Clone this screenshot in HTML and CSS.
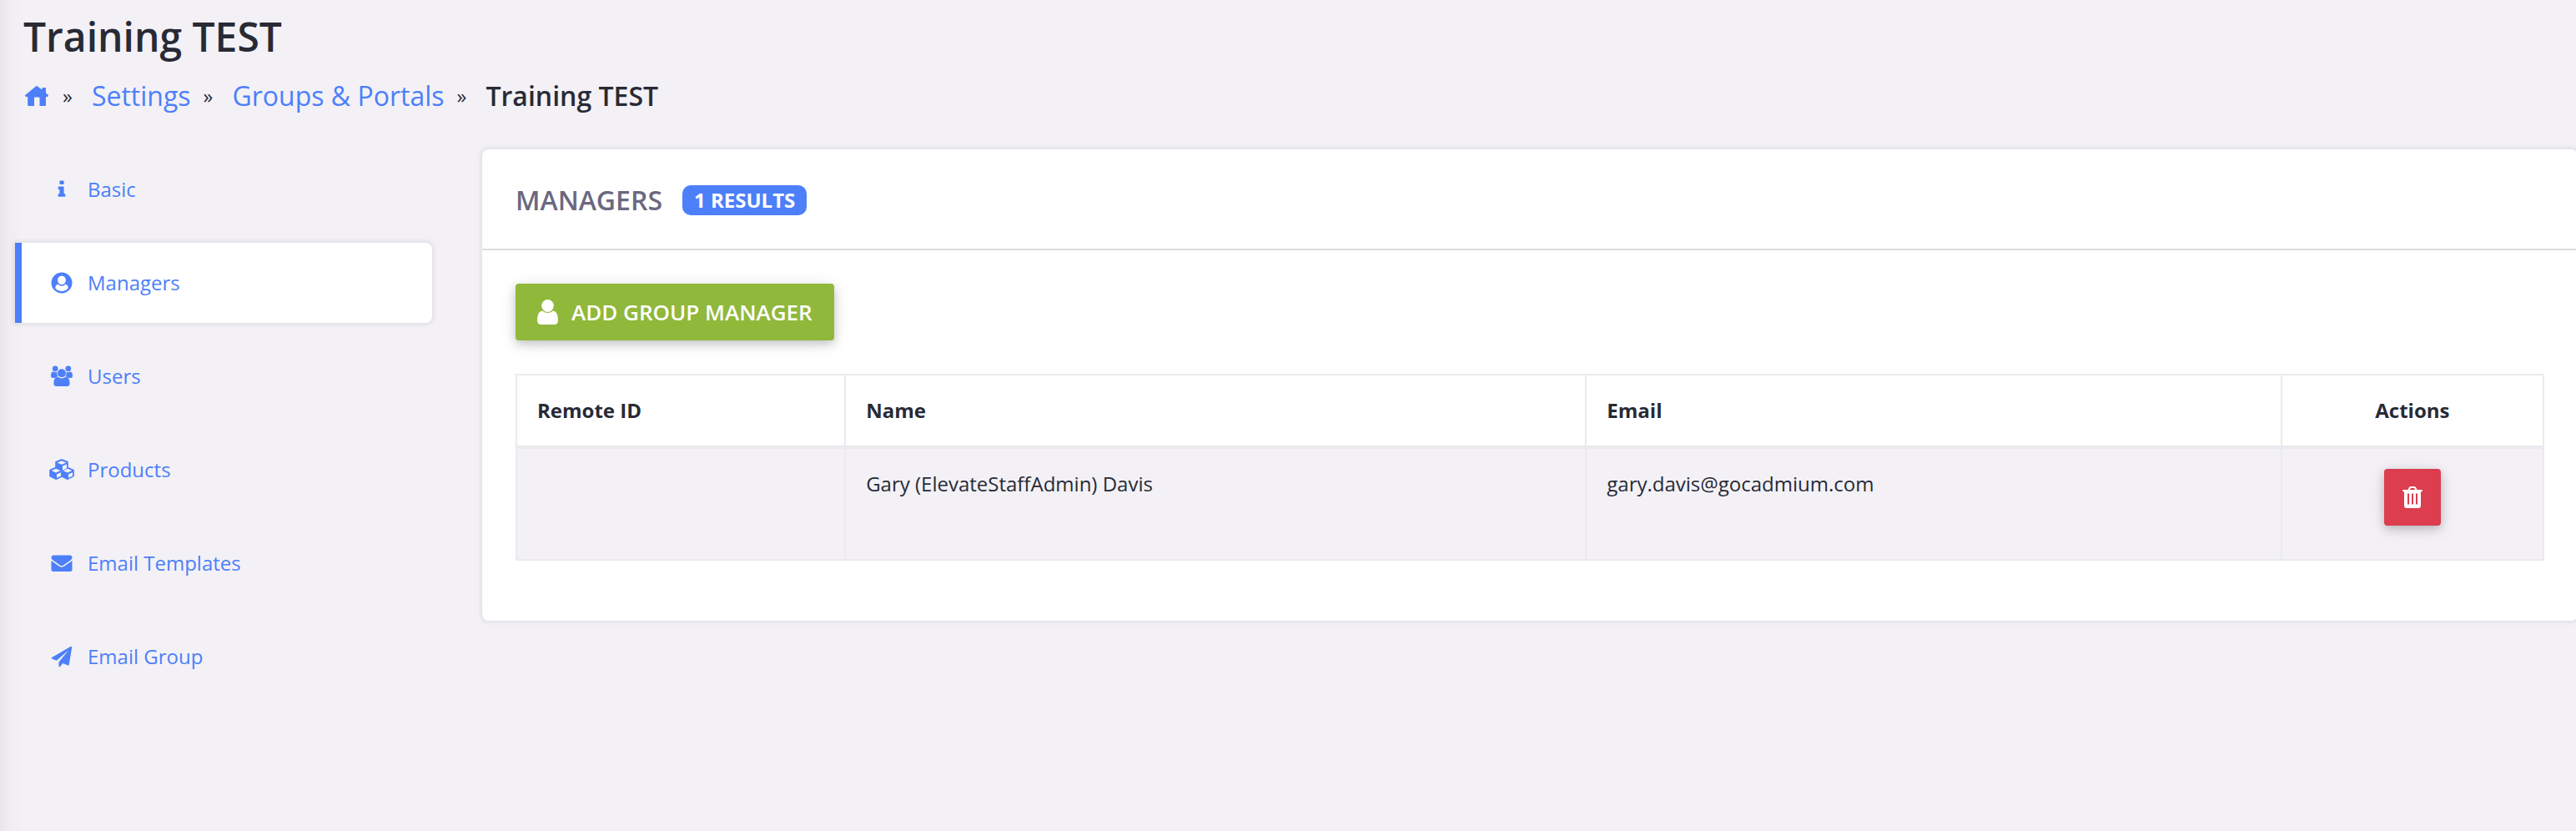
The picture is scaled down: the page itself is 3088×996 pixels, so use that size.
FILE: index.html
```
<!DOCTYPE html>
<html lang="en">
<head>
    <meta charset="UTF-8">
    <meta name="viewport" content="width=device-width, initial-scale=1.0">
    <title>Training TEST</title>
    <link rel="stylesheet" href="styles.css">
</head>
<body>
    <header class="page-header">
        <h1>Training TEST</h1>
        <nav class="breadcrumb" aria-label="Breadcrumb">
            <a href="#" class="home" aria-label="Home">
                <svg viewBox="0 0 28 24"><path d="M13 .4q1-.8 2 0L20.500 4.600V3q0-1 1-1h2.500q1 0 1 1v5.500l2.600 2.200q.8.900 0 1.800q-.6.500-1.600.5H25v10q0 1-1 1h-6.500V14.500q0-1-1-1H12q-1 0-1 1V24H4.200q-1 0-1-1V13H2q-1 0-1.600-.5q-.8-.9 0-1.800z"/></svg>
            </a>
            <span class="sep">»</span>
            <a href="#">Settings</a>
            <span class="sep">»</span>
            <a href="#">Groups &amp; Portals</a>
            <span class="sep">»</span>
            <span class="current">Training TEST</span>
        </nav>
    </header>

    <div class="layout">
        <nav class="side-menu" aria-label="Group settings">
            <a href="#">
                <svg viewBox="-128 -128 2048 2048"><path d="M1216 1344v128q0 26-19 45t-45 19h-512q-26 0-45-19t-19-45v-128q0-26 19-45t45-19h64v-384h-64q-26 0-45-19t-19-45v-128q0-26 19-45t45-19h384q26 0 45 19t19 45v576h64q26 0 45 19t19 45zm-128-1152v192q0 26-19 45t-45 19h-256q-26 0-45-19t-19-45v-192q0-26 19-45t45-19h256q26 0 45 19t19 45z"/></svg>
                Basic
            </a>
            <a href="#" class="active" aria-current="page">
                <svg viewBox="0 0 28 28"><path fill-rule="evenodd" d="M14 1.500a12.500 12.500 0 1 1 0 25a12.500 12.500 0 0 1 0-25zM14 5.500a4.900 5.300 0 0 0 0 10.600a4.900 5.300 0 0 0 0-10.600zM9.600 15.500C7.500 16 6.300 18 6.300 20.200C8.200 22.800 11 24 14 24s5.800-1.200 7.700-3.800C21.700 18 20.500 16 18.400 15.500C17.200 17 15.700 17.700 14 17.700S10.800 17 9.600 15.500z"/></svg>
                Managers
            </a>
            <a href="#">
                <svg viewBox="0 0 28 28"><circle cx="6.200" cy="4.800" r="3.400"/><circle cx="21.800" cy="4.800" r="3.400"/><path d="M4 8.500q2.200 1.300 4.400.3q-.6 3.200 1.300 5.400q-2.200.2-3.500 1.800H3.500Q1 16 1 13.500Q1 8.500 4 8.500zM24 8.500q-2.200 1.300-4.400.3q.6 3.200-1.300 5.400q2.200.2 3.500 1.800h2.700Q27 16 27 13.500Q27 8.500 24 8.500z"/><circle cx="14" cy="10.200" r="5"/><path d="M9.500 14.800Q14 18 18.500 14.800Q23.600 15 23.600 22.500Q23.600 26 20.300 26H7.700Q4.400 26 4.400 22.500Q4.400 15 9.500 14.800z"/></svg>
                Users
            </a>
            <a href="#">
                <svg viewBox="0 0 28 28"><path fill-rule="evenodd" d="M14 1l7 2.700q.8.400.8 1.300v6l6 2.500q1 .4 1 1.400v6.500q0 .8-.8 1.200l-6.500 3.200q-.8.300-1.500 0L14 22.800l-6 3q-.8.300-1.500 0L0 22.600q-.8-.4-.8-1.200v-6.500q0-1 1-1.400l6-2.500V5q0-.9.800-1.300zM14 3.200L8.500 5.400L14 7.700l5.500-2.300zM20 7.500l-5 2v5l5-2.200zM7 12.800l-5.400 2.300L7 17.400l5.500-2.300zM21 12.800l-5.500 2.300L21 17.400l5.400-2.300zM13 17.200l-5 2.200v4.400l5-2.400zM27 17.200l-5 2.200v4.400l5-2.400z"/></svg>
                Products
            </a>
            <a href="#">
                <svg viewBox="0 0 28 28"><path d="M4.500 4.500h19Q26.500 4.500 26.500 7.500Q26.500 9 24.500 10.400L16 16.400q-2 1.300-4 0L3.500 10.400Q1.500 9 1.500 7.500Q1.500 4.500 4.500 4.500zM1.500 11l9.200 6.600q3.300 2.300 6.600 0L26.500 11v10.500Q26.500 24 24 24H4Q1.500 24 1.500 21.500z"/></svg>
                Email Templates
            </a>
            <a href="#">
                <svg viewBox="-128 -128 2048 2048"><path d="M1764 11q33 24 27 64l-256 1536q-5 29-32 45-14 8-31 8-11 0-24-5l-453-185-242 295q-18 23-49 23-13 0-22-4-19-7-30.500-23.500t-11.500-36.500v-349l864-1059-1069 925-395-162q-37-14-40-55-2-40 32-59l1664-960q15-9 32-9 20 0 36 11z"/></svg>
                Email Group
            </a>
        </nav>

        <main class="card">
            <div class="card-header">
                <h2>Managers</h2>
                <span class="badge">1 Results</span>
            </div>
            <div class="card-body">
                <button type="button" class="btn btn-add">
                    <svg viewBox="0 0 25 30"><ellipse cx="12.500" cy="7.500" rx="7.300" ry="7.500"/><path d="M6 13.500Q12.500 18.500 19 13.500Q25 14.500 25 25Q25 30 20 30H5Q0 30 0 25Q0 14.500 6 13.500z"/></svg>
                    Add Group Manager
                </button>

                <table class="managers">
                    <thead>
                        <tr>
                            <th class="col-id">Remote ID</th>
                            <th class="col-name">Name</th>
                            <th class="col-email">Email</th>
                            <th class="col-actions">Actions</th>
                        </tr>
                    </thead>
                    <tbody>
                        <tr>
                            <td></td>
                            <td>Gary (ElevateStaffAdmin) Davis</td>
                            <td>gary.davis@gocadmium.com</td>
                            <td class="col-actions">
                                <button type="button" class="btn btn-delete" aria-label="Delete">
                                    <svg viewBox="0 0 24 26"><path fill-rule="evenodd" d="M6.500 4L7.600 1.500Q8.200 0 9.800 0h4.400q1.600 0 2.200 1.500L17.500 4H23q1 0 1 1v.400q0 .8-1 .8H22V23q0 3-3 3H5q-3 0-3-3V6.200H1q-1 0-1-.8V5q0-1 1-1zM8.800 4h6.400L14.400 2.400Q14.200 2 13.800 2h-3.600q-.4 0-.6.400zM6 8.500V21.500h2V8.500zM11 8.500V21.500h2V8.500zM16 8.500V21.500h2V8.500z"/></svg>
                                </button>
                            </td>
                        </tr>
                    </tbody>
                </table>
            </div>
        </main>
    </div>
</body>
</html>
```

FILE: styles.css
```
* {
    box-sizing: border-box;
}

body {
    margin: 0;
    min-height: 100vh;
    overflow-x: hidden;
    font-family: "Open Sans", sans-serif;
    font-size: 24px;
    line-height: 36px;
    color: #282a35;
    background: linear-gradient(to right, #e8e6e9, #efedf1 10px, #f3f1f6 28px);
}

a {
    color: #4d7ff9;
    text-decoration: none;
}

svg {
    display: block;
    fill: currentColor;
    overflow: visible;
}

.page-header {
    padding: 12px 28px 0;
}

h1 {
    margin: 0;
    font-size: 48px;
    line-height: 64px;
    font-weight: 600;
}

.breadcrumb {
    display: flex;
    align-items: center;
    margin-top: 15px;
    font-size: 32px;
    line-height: 48px;
}

.breadcrumb .home svg {
    width: 28px;
    height: 24px;
    margin: 0 2px;
}

.breadcrumb .sep {
    margin: 0 23px 0 15px;
    font-size: 24px;
}

.breadcrumb .current {
    font-weight: 600;
}

.layout {
    display: flex;
    align-items: flex-start;
    gap: 60px;
    margin-top: 40px;
    padding-left: 18px;
}

.side-menu {
    display: flex;
    flex-direction: column;
    gap: 16px;
    flex: 0 0 500px;
}

.side-menu a {
    display: flex;
    align-items: center;
    gap: 17px;
    height: 96px;
    padding-left: 34px;
    border-left: 8px solid transparent;
}

.side-menu svg {
    width: 28px;
    height: 28px;
}

.side-menu .active {
    border-left-color: #4d7ff9;
    border-radius: 0 8px 8px 0;
    background-color: #fff;
    box-shadow: 0 0 4px 3px rgba(0, 0, 0, 0.06);
}

/* runs just past the right edge of the window */
.card {
    flex: 1;
    margin-right: -2px;
    border-radius: 8px;
    background-color: #fff;
    box-shadow: 0 0 4px 3px rgba(0, 0, 0, 0.06);
}

.card-header {
    display: flex;
    align-items: center;
    gap: 24px;
    height: 121px;
    padding: 2px 40px 0;
    border-bottom: 2px solid #dddcdf;
    text-transform: uppercase;
}

h2 {
    margin: 0;
    font-size: 32px;
    line-height: 48px;
    font-weight: 600;
    color: #6b6880;
}

.badge {
    padding: 0 14px;
    border-radius: 10px;
    background-color: #4d7ff9;
    color: #fff;
    font-weight: 700;
}

.card-body {
    padding: 40px 40px 72px;
}

.btn {
    display: inline-flex;
    align-items: center;
    justify-content: center;
    height: 68px;
    border: none;
    border-radius: 4px;
    color: #fff;
    font-family: inherit;
    cursor: pointer;
    box-shadow: 0 4px 12px rgba(0, 0, 0, 0.2), 0 4px 24px rgba(0, 0, 0, 0.08);
}

.btn-add {
    gap: 16px;
    padding: 0 26px;
    background-color: #90b83b;
    font-size: 26px;
    font-weight: 600;
    text-transform: uppercase;
}

.btn-add svg {
    width: 25px;
    height: 30px;
}

.btn-delete {
    width: 68px;
    margin-bottom: 16px;
    padding: 0;
    background-color: #dc3d4f;
    vertical-align: top;
}

.btn-delete svg {
    width: 24px;
    height: 26px;
}

.managers {
    width: 100%;
    margin-top: 40px;
    border-collapse: collapse;
    table-layout: fixed;
}

.managers th,
.managers td {
    padding: 24px;
    border: 2px solid #eaeaef;
    text-align: left;
    vertical-align: top;
}

.managers th {
    border-bottom-width: 4px;
    font-weight: 700;
}

.managers td {
    background-color: #f3f1f6;
}

.managers .col-id {
    width: 16.22%;
}

.managers .col-name {
    width: 36.55%;
}

.managers .col-email {
    width: 34.3%;
}

.managers .col-actions {
    text-align: center;
}
```
